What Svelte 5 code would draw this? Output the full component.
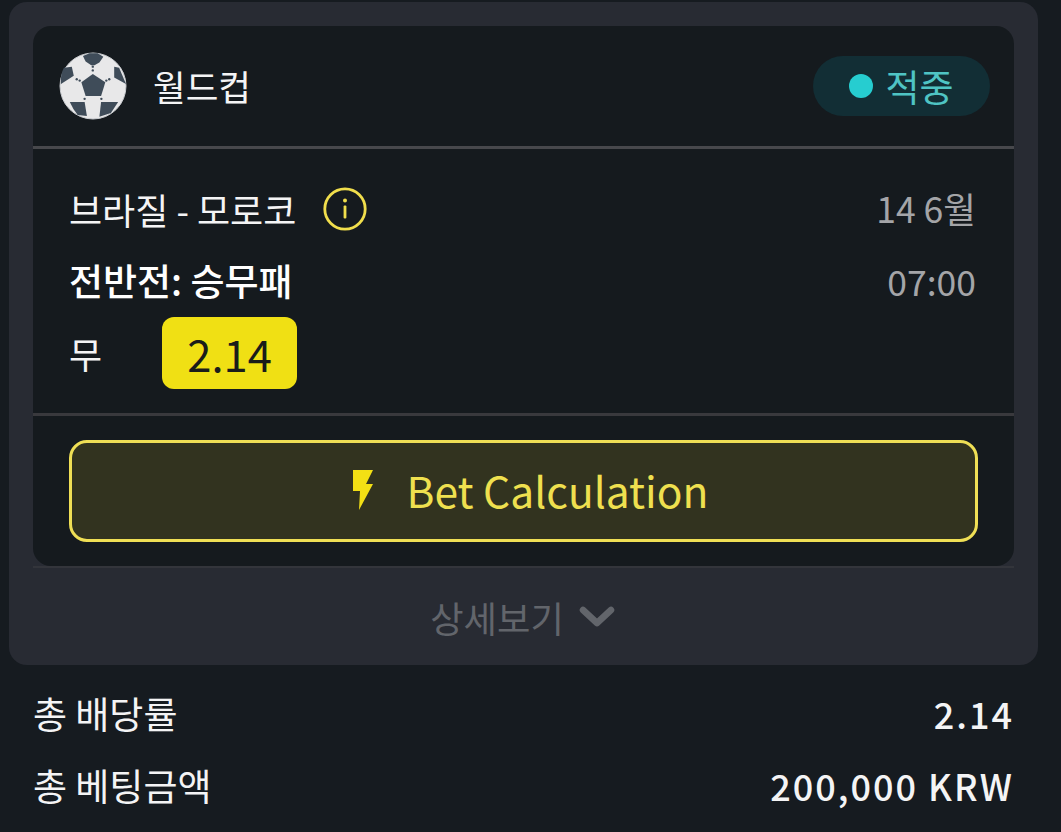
<script lang="ts">
  const totals = [
    { label: '총 배당률', value: '2.14' },
    { label: '총 베팅금액', value: '200,000 KRW' },
  ]
</script>

<div class="page">
  <div class="card">
    <div class="inner">
      <div class="league">
        <div class="league-name">
          <svg class="ball" width="68" height="68" viewBox="0 0 69 69">
            <circle cx="34.5" cy="34.5" r="33.5" fill="#e8e8e9" stroke="#c9ccd0" stroke-width="1" />
            <g fill="#3f4c59">
              <path d="M34.3 22.3 L47 30.7 L42.7 44.7 L27 44.7 L22.7 30.7 Z" />
              <path d="M24.3 4 L31 1.3 H39.3 L45 4.7 L41 10.7 L36 13.5 H32.7 L27 9.7 Z" />
              <path d="M5 16 L13 15 L15 24 L2 32.5 Q1 23 5 16 Z" />
              <path d="M56 15 L61 16 L68 32.5 L56 26 Z" />
              <path d="M11 50.7 H26 L28.3 65 L19 64 Q14 58 11 50.7 Z" />
              <path d="M42.7 50.7 H60 L52.7 62 L41 65.7 Z" />
              <circle cx="34.3" cy="14.9" r="1.2" /><circle cx="34.3" cy="18.7" r="1.2" />
              <circle cx="18" cy="27.6" r="1.2" /><circle cx="21" cy="29" r="1.2" />
              <circle cx="51" cy="27.6" r="1.2" /><circle cx="48" cy="29" r="1.2" />
              <circle cx="26" cy="47.5" r="1.2" /><circle cx="43" cy="47.5" r="1.2" />
            </g>
          </svg>
          <span class="league-title">월드컵</span>
        </div>
        <div class="status"><span class="status-dot"></span>적중</div>
      </div>

      <div class="match">
        <div class="match-row teams-row">
          <div class="teams">
            <span>브라질 - 모로코</span>
            <svg class="info" width="44" height="44" viewBox="0 0 44 44" fill="none">
              <circle cx="22" cy="22" r="20.2" stroke="#f0de4c" stroke-width="2.8" />
              <circle cx="22" cy="13.5" r="2" fill="#f0de4c" />
              <rect x="20.6" y="18.5" width="2.8" height="13" rx="1" fill="#f0de4c" />
            </svg>
          </div>
          <span class="when date">14 6월</span>
        </div>
        <div class="match-row market-row">
          <span class="market">전반전: 승무패</span>
          <span class="when">07:00</span>
        </div>
        <div class="pick">
          <span class="pick-name">무</span>
          <span class="odds">2.14</span>
        </div>
      </div>

      <div class="calc">
        <button class="calc-btn">
          <svg class="bolt" width="22" height="40" viewBox="0 0 22 40">
            <path d="M1 0 H21 L14 14 H21 L7 40 L8 21 H1 Z" fill="#f3e014" />
          </svg>
          Bet Calculation
        </button>
      </div>
    </div>

    <div class="more">
      상세보기
      <svg width="36" height="24" viewBox="0 0 36 24" fill="none">
        <path d="M4 5 L18 18 L32 5" stroke="#62656b" stroke-width="6.5" stroke-linecap="round" stroke-linejoin="round" />
      </svg>
    </div>
  </div>

  <div class="totals">
    {#each totals as row}
      <div class="total-row">
        <span>{row.label}</span>
        <span class="total-value">{row.value}</span>
      </div>
    {/each}
  </div>
</div>

<style>
  :global(body) {
    background: #161b20;
  }

  .page {
    width: 1061px;
    height: 832px;
    overflow: hidden;
    padding: 2px 23px 0 9px;
    box-sizing: border-box;
    font-family: "Noto Sans CJK KR", "Noto Sans", sans-serif;
    color: #f4f4f5;
  }

  .card {
    background: #282b33;
    border-radius: 18px;
    padding: 24px 24px 0;
    height: 663px;
    box-sizing: border-box;
  }

  .inner {
    background: #151a1e;
    border-radius: 18px;
    height: 540px;
    display: flex;
    flex-direction: column;
  }

  .league {
    height: 123px;
    flex: none;
    box-sizing: border-box;
    border-bottom: 3px solid #47484c;
    display: flex;
    align-items: center;
    justify-content: space-between;
    padding: 0 24px 0 26px;
  }

  .league-name {
    display: flex;
    align-items: center;
    gap: 26px;
  }

  .league-title {
    font-size: 35.5px;
    line-height: 1;
  }

  .status {
    width: 177px;
    height: 60px;
    border-radius: 30px;
    background: #122e35;
    color: #4fc4c4;
    font-size: 37px;
    display: flex;
    align-items: center;
    justify-content: center;
    gap: 12px;
  }

  .status-dot {
    width: 24px;
    height: 24px;
    border-radius: 50%;
    background: #26cdd0;
  }

  .match {
    height: 267px;
    flex: none;
    box-sizing: border-box;
    border-bottom: 3px solid #39393d;
    padding: 38px 38px 0 36px;
    font-size: 36px;
  }

  .match-row {
    display: flex;
    align-items: center;
    justify-content: space-between;
  }

  .teams-row {
    height: 44px;
  }

  .market-row {
    height: 44px;
    margin-top: 27px;
  }

  .teams {
    display: flex;
    align-items: center;
    gap: 27px;
  }

  .when {
    color: #a4a5a8;
    font-size: 35.5px;
  }

  .date {
    margin-top: -3px;
  }

  .market {
    font-size: 37px;
    font-weight: 500;
    color: #fff;
  }

  .pick {
    display: flex;
    align-items: center;
    gap: 60px;
    margin-top: 15px;
  }

  .odds {
    width: 135px;
    height: 72px;
    background: #f0e014;
    color: #1a1c1a;
    border-radius: 12px;
    font-size: 43.5px;
    display: flex;
    align-items: center;
    justify-content: center;
  }

  .calc {
    padding: 24px 36px 0;
  }

  .calc-btn {
    width: 100%;
    height: 102px;
    box-sizing: border-box;
    background: #32331f;
    border: 3px solid #efdf55;
    border-radius: 18px;
    color: #efe04f;
    font-family: inherit;
    font-size: 42.5px;
    display: flex;
    align-items: center;
    justify-content: center;
    gap: 33px;
    padding: 0 0 3px 11px;
  }

  .bolt {
    margin-left: 2px;
  }

  .more {
    height: 97px;
    box-sizing: border-box;
    border-top: 2px solid #33353b;
    padding-top: 3px;
    display: flex;
    align-items: center;
    justify-content: center;
    gap: 15px;
    color: #62656b;
    font-size: 36.3px;
  }

  .more svg {
    margin-right: 2px;
  }

  .totals {
    padding: 12px 24px 0 24px;
    font-size: 37px;
  }

  .total-row {
    height: 72px;
    display: flex;
    align-items: center;
    justify-content: space-between;
  }

  .total-value {
    font-size: 36px;
    font-weight: 500;
    letter-spacing: 2px;
  }
</style>
